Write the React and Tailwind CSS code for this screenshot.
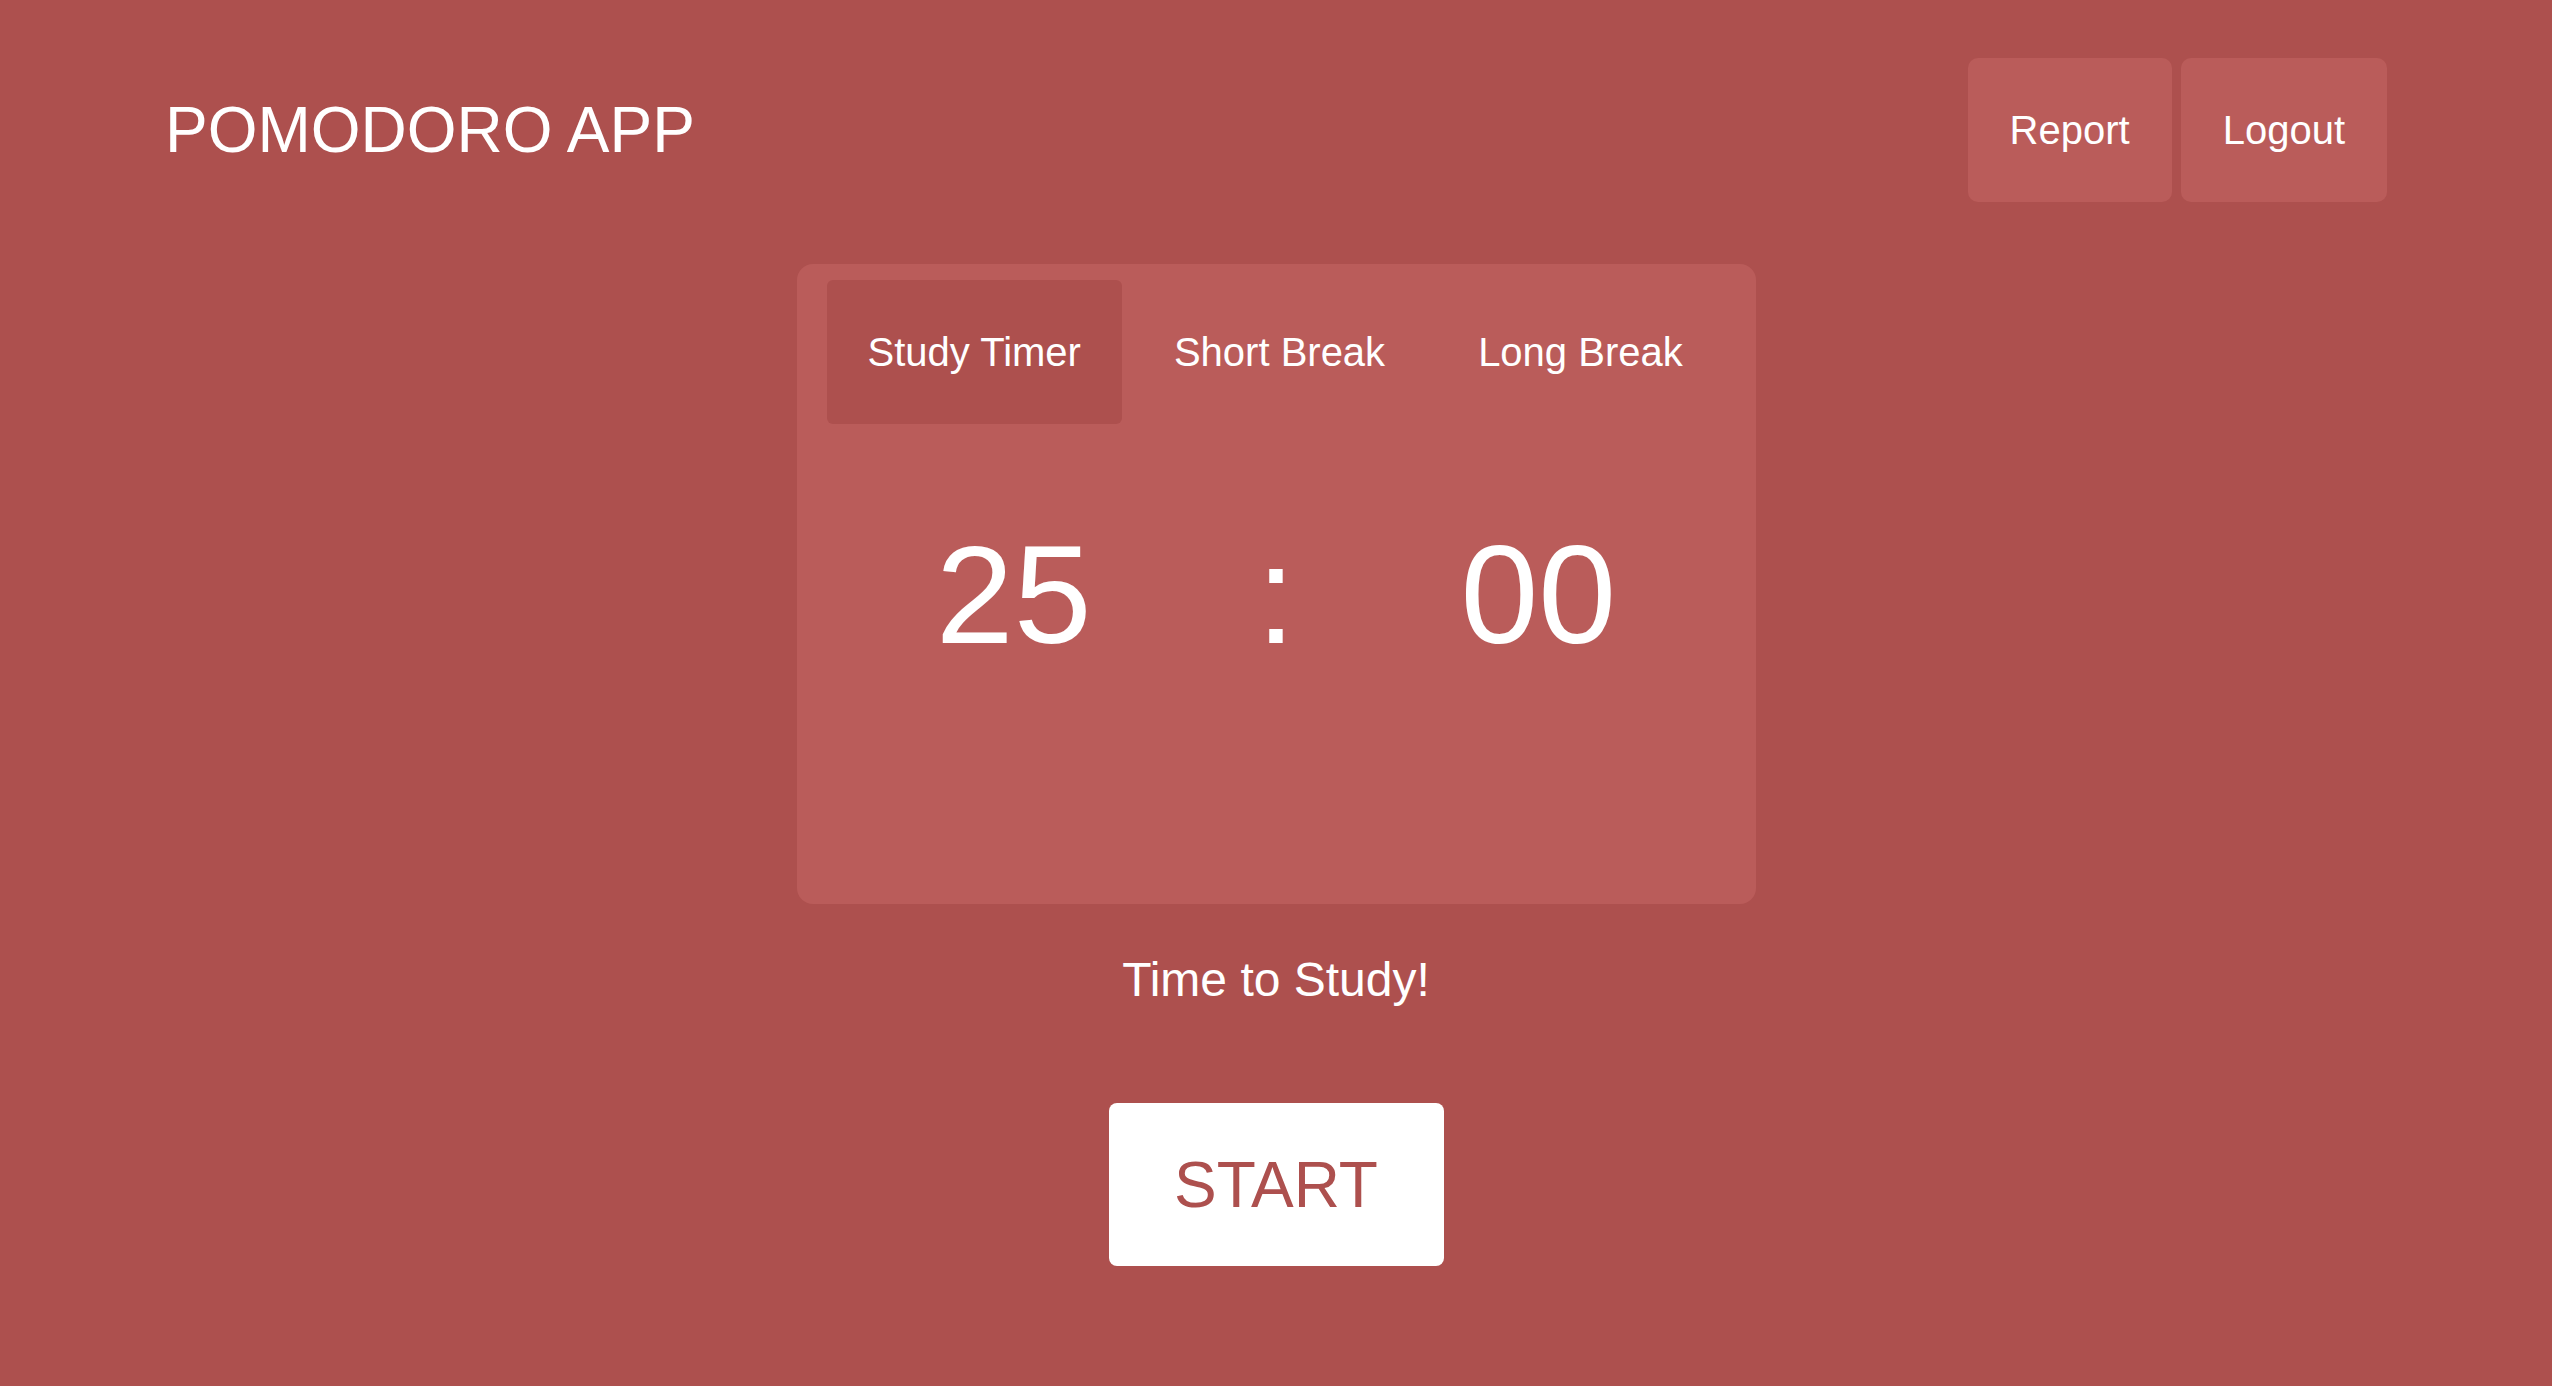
export default function App() {
  const font = { fontFamily: '"Liberation Sans", Arial, Helvetica, sans-serif' };
  return (
    <div className="min-h-[1386px] w-full bg-[#ad504e] text-white" style={font}>
      <header className="flex items-center justify-between px-[165px] pt-[58px]">
        <h1 className="text-[64px] font-normal leading-none">POMODORO APP</h1>
        <div className="flex gap-[9px]">
          <button className="h-[144px] rounded-[10px] bg-[#ba5c5a] px-[42px] text-[40px] text-white">Report</button>
          <button className="h-[144px] rounded-[10px] bg-[#ba5c5a] px-[42px] text-[40px] text-white">Logout</button>
        </div>
      </header>
      <main className="flex flex-col items-center pt-[62px]">
        <div className="h-[640px] w-[959px] rounded-[16px] bg-[#ba5c5a] pt-[16px]">
          <div className="flex gap-[11px] px-[30px]">
            <button className="h-[144px] rounded-[6px] bg-[#ad504e] px-[41px] text-[40px] text-white">Study Timer</button>
            <button className="h-[144px] rounded-[6px] px-[41px] text-[40px] text-white">Short Break</button>
            <button className="h-[144px] rounded-[6px] px-[41px] text-[40px] text-white">Long Break</button>
          </div>
          <div className="mt-[90px] flex justify-center gap-[165px] text-[140px] leading-[1.15]">
            <span>25</span>
            <span>:</span>
            <span>00</span>
          </div>
        </div>
        <p className="mt-[48px] text-[48px] leading-[1.15]">Time to Study!</p>
        <button className="mt-[96px] h-[163px] w-[335px] rounded-[8px] bg-white text-[64px] text-[#ad504e]">START</button>
      </main>
    </div>
  );
}
